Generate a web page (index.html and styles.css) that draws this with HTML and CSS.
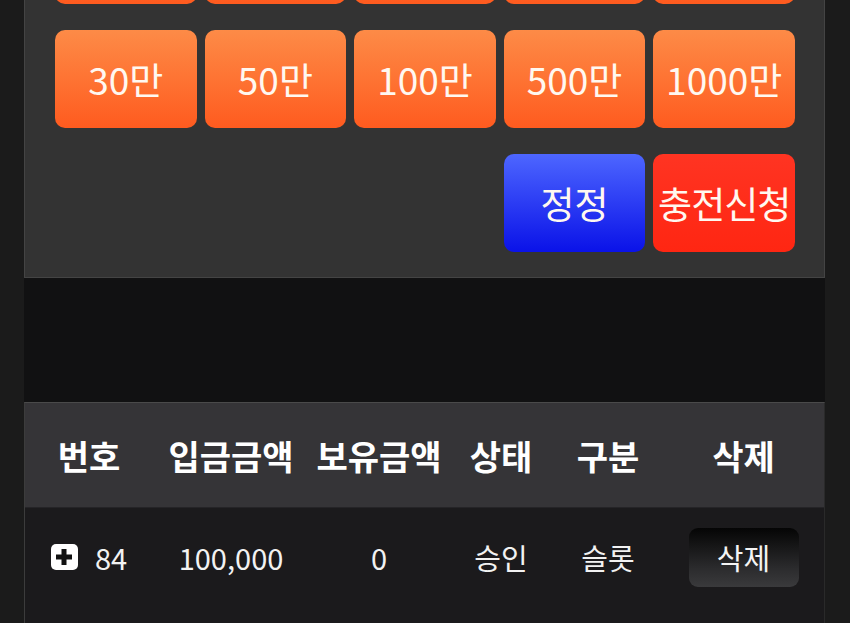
FILE: index.html
```html
<!DOCTYPE html>
<html lang="ko">
<head>
    <meta charset="UTF-8">
    <meta name="viewport" content="width=device-width, initial-scale=1.0">
    <title>충전신청</title>
    <link rel="stylesheet" href="styles.css">
</head>
<body>
    <div class="wrap">
        <section class="charge-box">
            <div class="amount-grid">
                <button class="btn btn-amount">1만</button>
                <button class="btn btn-amount">3만</button>
                <button class="btn btn-amount">5만</button>
                <button class="btn btn-amount">10만</button>
                <button class="btn btn-amount">20만</button>
                <button class="btn btn-amount">30만</button>
                <button class="btn btn-amount">50만</button>
                <button class="btn btn-amount">100만</button>
                <button class="btn btn-amount">500만</button>
                <button class="btn btn-amount">1000만</button>
                <button class="btn btn-reset">정정</button>
                <button class="btn btn-submit">충전신청</button>
            </div>
        </section>

        <div class="spacer"></div>

        <section class="history">
            <table class="history-table">
                <colgroup>
                    <col style="width:128px">
                    <col style="width:156px">
                    <col style="width:140px">
                    <col style="width:104px">
                    <col style="width:110px">
                    <col>
                </colgroup>
                <thead>
                    <tr>
                        <th>번호</th>
                        <th>입금금액</th>
                        <th>보유금액</th>
                        <th>상태</th>
                        <th>구분</th>
                        <th>삭제</th>
                    </tr>
                </thead>
                <tbody>
                    <tr>
                        <td><span class="no"><span class="plus"></span>84</span></td>
                        <td>100,000</td>
                        <td>0</td>
                        <td>승인</td>
                        <td>슬롯</td>
                        <td><button class="btn-del">삭제</button></td>
                    </tr>
                </tbody>
            </table>
        </section>
    </div>
</body>
</html>
```

FILE: styles.css
```css
* {
    margin: 0;
    padding: 0;
    box-sizing: border-box;
}

body {
    background-color: #1b1b1b;
    font-family: "Noto Sans CJK KR", "Noto Sans", sans-serif;
    color: #fff;
    overflow: hidden;
}

.wrap {
    margin: -124px 25px 0 24px;
    background-color: #111112;
    min-height: 800px;
}

/* charge amount panel */
.charge-box {
    background-color: #333333;
    border: 1px solid #444;
    padding: 29px 29px 25px 30px;
}

.amount-grid {
    display: grid;
    grid-template-columns: repeat(5, 1fr);
    column-gap: 8px;
    row-gap: 26px;
}

.btn {
    height: 98px;
    border: none;
    border-radius: 10px;
    color: #fff8f0;
    font-family: "Noto Sans CJK KR", "Noto Sans", sans-serif;
    font-size: 37px;
    white-space: nowrap;
}

.btn-amount {
    background: linear-gradient(to bottom, #fd8b47, #ff5b1f);
}

.btn-reset {
    grid-column: 4;
    background: linear-gradient(to bottom, #4d66ff, #0a12e8);
}

.btn-submit {
    grid-column: 5;
    background: linear-gradient(to bottom, #ff3422, #ff2612);
    letter-spacing: -1px;
}

.spacer {
    height: 124px;
}

/* history table */
.history {
    border-top: 1px solid #4a4a4a;
    border-left: 1px solid #3c3c3c;
    border-right: 1px solid #2a2a2a;
    background-color: #1b1a1c;
    min-height: 300px;
}

.history-table {
    width: 100%;
    table-layout: fixed;
    border-collapse: collapse;
}

.history-table th {
    height: 104px;
    background-color: #353437;
    font-size: 34px;
    font-weight: bold;
    text-align: center;
    padding-top: 2px;
}

.history-table td {
    height: 104px;
    padding-bottom: 4px;
    font-size: 29px;
    color: #f2f2f2;
    text-align: center;
    border-top: 1px solid #252427;
}

.no {
    display: inline-flex;
    align-items: center;
    gap: 17px;
}

.plus {
    position: relative;
    display: inline-block;
    width: 27px;
    height: 26px;
    background-color: #fff;
    border-radius: 5px;
}

.plus::before,
.plus::after {
    content: "";
    position: absolute;
    background-color: #111;
    left: 50%;
    top: 50%;
    transform: translate(-50%, -50%);
}

.plus::before {
    width: 16px;
    height: 5px;
}

.plus::after {
    width: 5px;
    height: 16px;
}

.btn-del {
    width: 110px;
    height: 59px;
    border: none;
    border-radius: 9px;
    background: linear-gradient(to bottom, #050505, #2c2c2e 70%, #3a3a3c);
    color: #f4f4f4;
    font-family: "Noto Sans CJK KR", "Noto Sans", sans-serif;
    font-size: 29px;
}
```
